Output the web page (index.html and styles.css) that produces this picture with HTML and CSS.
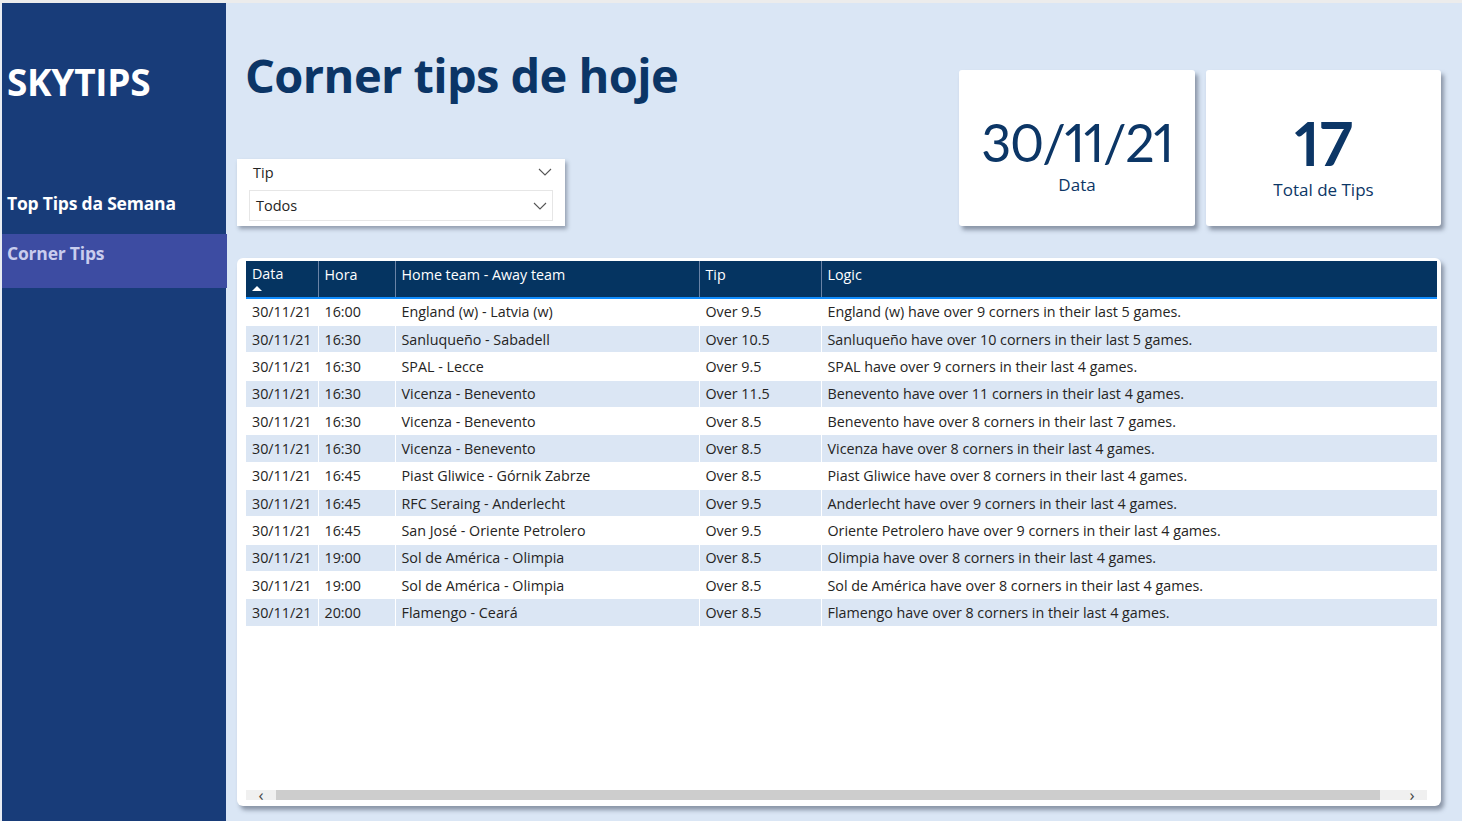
FILE: index.html
```html
<!DOCTYPE html>
<html lang="pt">
<head>
<meta charset="utf-8">
<title>SKYTIPS - Corner Tips</title>
<link rel="stylesheet" href="styles.css">
</head>
<body>
<div class="topstrip"></div>
<div class="app">
  <aside class="sidebar">
    <div class="brand">SKYTIPS</div>
    <nav class="nav">
      <div class="nav-item">Top Tips da Semana</div>
      <div class="nav-item active">Corner Tips</div>
    </nav>
  </aside>
  <main class="main">
    <div class="top">
      <div class="left">
        <h1 class="title">Corner tips de hoje</h1>
        <div class="slicer">
          <div class="slicer-head">
            <span>Tip</span>
            <svg class="chev" width="14" height="8" viewBox="0 0 14 8"><path d="M1 1 L7 7 L13 1" fill="none" stroke="#555" stroke-width="1.1"/></svg>
          </div>
          <div class="slicer-box">
            <span>Todos</span>
            <svg class="chev" width="14" height="8" viewBox="0 0 14 8"><path d="M1 1 L7 7 L13 1" fill="none" stroke="#555" stroke-width="1.1"/></svg>
          </div>
        </div>
      </div>
      <div class="kpis">
        <div class="kpi kpi-date">
          <div class="kpi-value">30/11/21</div>
          <div class="kpi-label">Data</div>
        </div>
        <div class="kpi kpi-total">
          <div class="kpi-value big">17</div>
          <div class="kpi-label">Total de Tips</div>
        </div>
      </div>
    </div>
    <section class="table-card">
      <div class="table-wrap">
        <table class="tips">
          <colgroup>
            <col class="c-data"><col class="c-hora"><col class="c-game"><col class="c-tip"><col class="c-logic">
          </colgroup>
          <thead>
            <tr>
              <th><span>Data</span><span class="sort"></span></th>
              <th>Hora</th>
              <th>Home team - Away team</th>
              <th>Tip</th>
              <th>Logic</th>
            </tr>
          </thead>
          <tbody>
            <tr><td>30/11/21</td><td>16:00</td><td>England (w) - Latvia (w)</td><td>Over 9.5</td><td>England (w) have over 9 corners in their last 5 games.</td></tr>
            <tr><td>30/11/21</td><td>16:30</td><td>Sanluqueño - Sabadell</td><td>Over 10.5</td><td>Sanluqueño have over 10 corners in their last 5 games.</td></tr>
            <tr><td>30/11/21</td><td>16:30</td><td>SPAL - Lecce</td><td>Over 9.5</td><td>SPAL have over 9 corners in their last 4 games.</td></tr>
            <tr><td>30/11/21</td><td>16:30</td><td>Vicenza - Benevento</td><td>Over 11.5</td><td>Benevento have over 11 corners in their last 4 games.</td></tr>
            <tr><td>30/11/21</td><td>16:30</td><td>Vicenza - Benevento</td><td>Over 8.5</td><td>Benevento have over 8 corners in their last 7 games.</td></tr>
            <tr><td>30/11/21</td><td>16:30</td><td>Vicenza - Benevento</td><td>Over 8.5</td><td>Vicenza have over 8 corners in their last 4 games.</td></tr>
            <tr><td>30/11/21</td><td>16:45</td><td>Piast Gliwice - Górnik Zabrze</td><td>Over 8.5</td><td>Piast Gliwice have over 8 corners in their last 4 games.</td></tr>
            <tr><td>30/11/21</td><td>16:45</td><td>RFC Seraing - Anderlecht</td><td>Over 9.5</td><td>Anderlecht have over 9 corners in their last 4 games.</td></tr>
            <tr><td>30/11/21</td><td>16:45</td><td>San José - Oriente Petrolero</td><td>Over 9.5</td><td>Oriente Petrolero have over 9 corners in their last 4 games.</td></tr>
            <tr><td>30/11/21</td><td>19:00</td><td>Sol de América - Olimpia</td><td>Over 8.5</td><td>Olimpia have over 8 corners in their last 4 games.</td></tr>
            <tr><td>30/11/21</td><td>19:00</td><td>Sol de América - Olimpia</td><td>Over 8.5</td><td>Sol de América have over 8 corners in their last 4 games.</td></tr>
            <tr><td>30/11/21</td><td>20:00</td><td>Flamengo - Ceará</td><td>Over 8.5</td><td>Flamengo have over 8 corners in their last 4 games.</td></tr>
          </tbody>
        </table>
      </div>
      <div class="hscroll">
        <span class="arrow">&#8249;</span>
        <div class="track"><div class="thumb"></div></div>
        <span class="arrow">&#8250;</span>
      </div>
    </section>
  </main>
</div>
</body>
</html>
```
FILE: styles.css
```css
* { box-sizing: border-box; }
html, body { margin: 0; padding: 0; }
body {
  width: 1462px;
  height: 821px;
  overflow: hidden;
  background: #dae6f5;
  font-family: "Open Sans", "Noto Sans", sans-serif;
  color: #252423;
}
.topstrip {
  height: 3px;
  background: #ececec;
}
.app {
  display: flex;
  height: 818px;
  border-left: 2px solid #e9edf3;
}
.sidebar {
  width: 224px;
  flex: none;
  background: #183c79;
  display: flex;
  flex-direction: column;
}
.brand {
  color: #ffffff;
  font-weight: 700;
  font-size: 37px;
  letter-spacing: -0.3px;
  line-height: 50px;
  padding: 54px 0 0 5px;
  height: 172px;
}
.nav { display: flex; flex-direction: column; }
.nav-item {
  height: 59px;
  display: flex;
  align-items: center;
  padding-left: 5px;
  padding-bottom: 4px;
  color: #ffffff;
  font-weight: 700;
  font-size: 17.5px;
  letter-spacing: -0.2px;
}
.nav-item.active {
  background: #3d4ca2;
  color: #c9cdee;
  height: 54px;
  margin-right: -1px;
  padding-bottom: 16px;
}
.main {
  flex: 1;
  display: flex;
  flex-direction: column;
  padding: 0 21px 0 11px;
}
.top {
  display: flex;
  justify-content: space-between;
  height: 255px;
}
.left { display: flex; flex-direction: column; }
.title {
  margin: 40px 0 0 8px;
  font-size: 47px;
  font-weight: 700;
  color: #0b3566;
  letter-spacing: -0.6px;
  line-height: 64px;
}
.slicer {
  margin-top: 52px;
  width: 328px;
  height: 67px;
  background: #fff;
  box-shadow: 2px 3px 4px rgba(60,70,90,0.45);
  padding: 2px 12px 0 12px;
}
.slicer-head {
  display: flex;
  justify-content: space-between;
  align-items: center;
  height: 22px;
  padding: 0 2px 0 4px;
  font-size: 14.5px;
  color: #252423;
}
.slicer-head .chev { margin-right: -1px; }
.slicer-box {
  margin-top: 7px;
  height: 31px;
  border: 1px solid #e6e6e6;
  display: flex;
  justify-content: space-between;
  align-items: center;
  padding: 0 5px 0 6px;
  font-size: 14.5px;
  color: #252423;
}
.chev { display: block; }
.kpis {
  display: flex;
  gap: 11px;
  margin-top: 67px;
}
.kpi {
  height: 156px;
  background: #fff;
  border-radius: 3px;
  box-shadow: 3px 4px 4px rgba(60,70,90,0.5);
  display: flex;
  flex-direction: column;
  align-items: center;
  color: #0d3766;
}
.kpi-date { width: 236px; padding-top: 42px; }
.kpi-total { width: 235px; padding-top: 41px; }
.kpi-value {
  font-family: Lato, "DejaVu Sans Condensed", sans-serif;
  font-size: 52px;
  line-height: 60px;
  letter-spacing: -1.3px;
  font-variant-numeric: proportional-nums;
  color: #0c3666;
}
.kpi-value.big { font-size: 61px; line-height: 64px; font-weight: 700; letter-spacing: 0; }
.kpi-label {
  font-size: 17px;
  line-height: 24px;
  margin-top: 1px;
  color: #0c3666;
}
.kpi-total .kpi-label { margin-top: 3px; }
.table-card {
  margin-top: 0;
  width: 1204px;
  height: 548px;
  background: #fff;
  border-radius: 6px;
  box-shadow: 3px 4px 4px rgba(60,70,90,0.5);
  padding: 3px 4px 4px 9px;
  display: flex;
  flex-direction: column;
}
.table-wrap { flex: 1; }
.tips {
  width: 1191px;
  border-collapse: collapse;
  table-layout: fixed;
  font-size: 14.3px;
}
.c-data { width: 72px; }
.c-hora { width: 77px; }
.c-game { width: 304px; }
.c-tip { width: 122px; }
.c-logic { width: 616px; }
.tips th {
  background: #053461;
  color: #ffffff;
  font-weight: 400;
  text-align: left;
  vertical-align: top;
  height: 37px;
  padding: 4px 6px 0;
  border-left: 1px solid #6a83a6;
  border-bottom: 2px solid #118dff;
  white-space: nowrap;
}
.tips th:first-child { border-left: none; }
.tips th span { display: block; line-height: 18px; }
.tips th .sort {
  width: 0; height: 0;
  border-left: 5px solid transparent;
  border-right: 5px solid transparent;
  border-bottom: 5px solid #fff;
  margin-top: 3px;
}
.tips td {
  height: 27.35px;
  padding: 0 6px;
  white-space: nowrap;
  border-left: 1px solid #fff;
  border-bottom: 1px solid #fff;
  color: #252423;
}
.tips td:first-child { border-left: none; }
.tips tbody tr:nth-child(even) td { background: #dbe6f4; }
.hscroll {
  display: flex;
  align-items: center;
  height: 10px;
  margin: 0 10px 2px 0;
  background: #f0f0f0;
}
.arrow {
  width: 30px;
  text-align: center;
  font-size: 17px;
  line-height: 10px;
  color: #444;
}
.track { flex: 1; height: 10px; }
.thumb {
  margin-left: 0;
  width: 1104px;
  height: 10px;
  background: #cdcdcd;
}
```
